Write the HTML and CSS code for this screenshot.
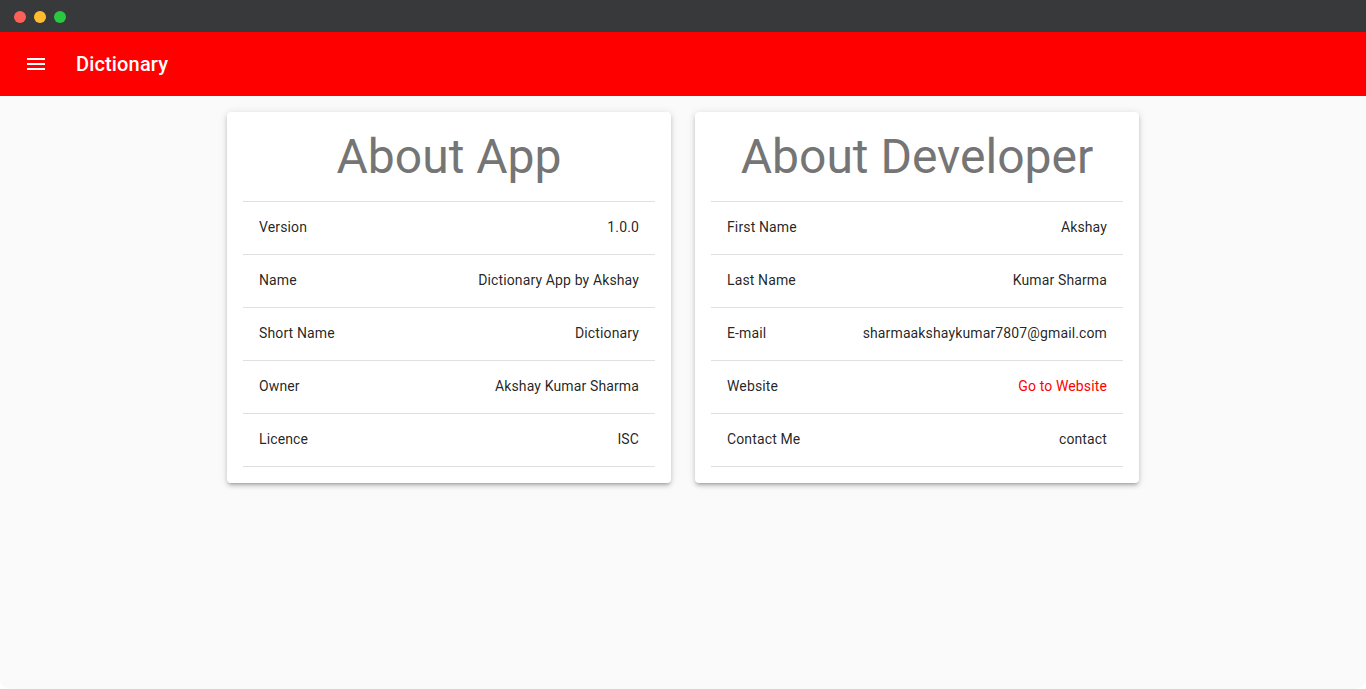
FILE: index.html
```html
<!DOCTYPE html>
<html>
<head>
<meta charset="utf-8">
<link rel="stylesheet" href="styles.css">
</head>
<body>
<div class="window">
  <div class="titlebar">
    <span class="dot red"></span><span class="dot yellow"></span><span class="dot green"></span>
  </div>
  <header class="toolbar">
    <svg class="menu" width="24" height="24" viewBox="0 0 24 24"><path d="M3 18h18v-2H3v2zm0-5h18v-2H3v2zm0-7v2h18V6H3z" fill="#fff"/></svg>
    <span class="brand">Dictionary</span>
  </header>
  <main class="content">
    <section class="card">
      <h1 class="card-title">About App</h1>
      <ul class="list">
        <li class="row"><span>Version</span><span>1.0.0</span></li>
        <li class="row"><span>Name</span><span>Dictionary App by Akshay</span></li>
        <li class="row"><span>Short Name</span><span>Dictionary</span></li>
        <li class="row"><span>Owner</span><span>Akshay Kumar Sharma</span></li>
        <li class="row"><span>Licence</span><span>ISC</span></li>
      </ul>
    </section>
    <section class="card">
      <h1 class="card-title">About Developer</h1>
      <ul class="list">
        <li class="row"><span>First Name</span><span>Akshay</span></li>
        <li class="row"><span>Last Name</span><span>Kumar Sharma</span></li>
        <li class="row"><span>E-mail</span><span>sharmaakshaykumar7807@gmail.com</span></li>
        <li class="row"><span>Website</span><a class="link" href="#">Go to Website</a></li>
        <li class="row"><span>Contact Me</span><span>contact</span></li>
      </ul>
    </section>
  </main>
</div>
</body>
</html>
```
FILE: styles.css
```css
* { box-sizing: border-box; }
html, body { margin: 0; padding: 0; background: #ffffff; }
body { font-family: Roboto, "Liberation Sans", sans-serif; }
.window {
  width: 1366px;
  height: 689px;
  background: #fafafa;
  border-radius: 0 0 10px 10px;
  overflow: hidden;
  display: flex;
  flex-direction: column;
}
.titlebar {
  height: 32px;
  background: #38393b;
  display: flex;
  align-items: center;
  gap: 8px;
  padding-left: 14px;
  padding-top: 2px;
}
.dot { width: 12px; height: 12px; border-radius: 50%; display: block; }
.dot.red { background: #fe5f57; }
.dot.yellow { background: #febc2e; }
.dot.green { background: #28c840; }
.toolbar {
  height: 64px;
  background: #ff0000;
  display: flex;
  align-items: center;
  padding-left: 24px;
  color: #fff;
}
.menu { display: block; }
.brand {
  margin-left: 28px;
  font-size: 20px;
  font-weight: 500;
  letter-spacing: 0.15px;
}
.content {
  display: flex;
  justify-content: center;
  align-items: flex-start;
  gap: 24px;
  padding-top: 16px;
}
.card {
  width: 444px;
  background: #fff;
  border-radius: 4px;
  box-shadow: 0 3px 3px -2px rgba(0,0,0,.2), 0 3px 4px 0 rgba(0,0,0,.14), 0 1px 8px 0 rgba(0,0,0,.12);
  padding: 16px 16px 16px;
}
.card-title {
  margin: 0;
  height: 74px;
  font-size: 48px;
  font-weight: 400;
  line-height: 58px;
  text-align: center;
  color: #757575;
  border-bottom: 1px solid #e0e0e0;
}
.list { list-style: none; margin: 0; padding: 0; }
.row {
  height: 53px;
  display: flex;
  justify-content: space-between;
  align-items: center;
  padding: 0 16px 2px;
  border-bottom: 1px solid #e0e0e0;
  font-size: 14px;
  letter-spacing: 0.13px;
  color: rgba(0,0,0,.87);
}
.link { color: #ff0000; text-decoration: none; }
```
